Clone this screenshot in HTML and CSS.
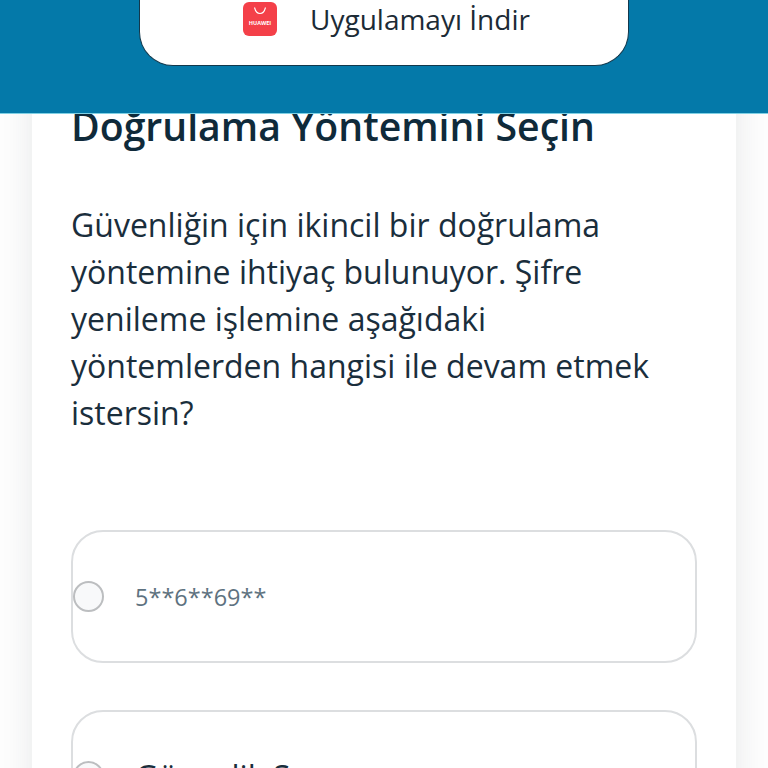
FILE: index.html
```
<!DOCTYPE html>
<html lang="tr">
<head>
<meta charset="utf-8">
<title>Doğrulama Yöntemini Seçin</title>
<link rel="stylesheet" href="styles.css">
</head>
<body>
<header class="banner">
  <a class="download" href="#">
    <svg class="app-icon" viewBox="0 0 34 34" aria-hidden="true">
      <rect width="34" height="34" rx="6" fill="#f44049"/>
      <path d="M11.5 5.5c1 4 3 6 5.500 6s4.500-2 5.500-6" fill="none" stroke="#fff" stroke-width="1.100"/>
      <text x="17" y="22.500" text-anchor="middle" class="app-icon-text">HUAWEI</text>
    </svg>
    <span class="download-label">Uygulamayı İndir</span>
  </a>
</header>
<main class="page">
  <section class="card">
    <h1 class="title">Doğrulama Yöntemini Seçin</h1>
    <p class="lead">Güvenliğin için ikincil bir doğrulama yöntemine ihtiyaç bulunuyor. Şifre yenileme işlemine aşağıdaki yöntemlerden hangisi ile devam etmek istersin?</p>
    <div class="options">
      <label class="option"><span class="radio"></span><span class="option-text">5**6**69**</span></label>
      <label class="option"><span class="radio"></span><span class="option-text option-strong">Güvenlik Sorusu</span></label>
    </div>
  </section>
</main>
</body>
</html>
```
FILE: styles.css
```
* { box-sizing: border-box; }
html, body { margin: 0; height: 768px; overflow: hidden; }
body {
  background: #fdfdfd;
  font-family: "Open Sans", "Noto Sans", sans-serif;
  color: #0f2533;
}
.banner {
  position: fixed;
  top: 0;
  left: 0;
  right: 0;
  height: 114px;
  background: #0479a9;
  border-bottom: 1px solid #7fd0e4;
  display: flex;
  justify-content: center;
  z-index: 2;
}
.download {
  width: 490px;
  height: 67px;
  margin-top: -1px;
  background: #fff;
  border: 1.500px solid #12384c;
  border-top: 0;
  border-radius: 0 0 34px 34px;
  display: flex;
  align-items: center;
  padding: 0 0 26px 103px;
  gap: 33px;
  text-decoration: none;
  color: #1c2b36;
}
.app-icon { width: 34px; height: 34px; flex: none; }
.app-icon-text { font: 700 5.500px "Open Sans", sans-serif; fill: #fff; }
.download-label { font-size: 28px; line-height: 34px; white-space: nowrap; }
.page { padding: 0 32px; }
.card {
  background: #fff;
  height: 900px;
  padding: 96px 39px 0;
  box-shadow: 0 0 30px rgba(40, 50, 60, .1);
}
.title {
  margin: 0;
  font-size: 39.2px;
  line-height: 60px;
  font-weight: 600;
  color: #0f2a3a;
}
.lead {
  margin: 45px 0 0;
  font-size: 32px;
  line-height: 47px;
  color: #1a2e3c;
}
.options { margin-top: 94px; display: flex; flex-direction: column; gap: 47px; }
.option {
  height: 133px;
  border: 2px solid #dcdee0;
  border-radius: 32px;
  display: flex;
  align-items: center;
  gap: 31px;
  background: #fff;
}
.radio {
  width: 31px;
  height: 31px;
  flex: none;
  border: 2px solid #bcbec0;
  border-radius: 50%;
  background: #f8f9fa;
}
.option-text { font-size: 23.5px; color: #5e7280; }
.option-strong { font-size: 32px; color: #1a2e3c; }
```
